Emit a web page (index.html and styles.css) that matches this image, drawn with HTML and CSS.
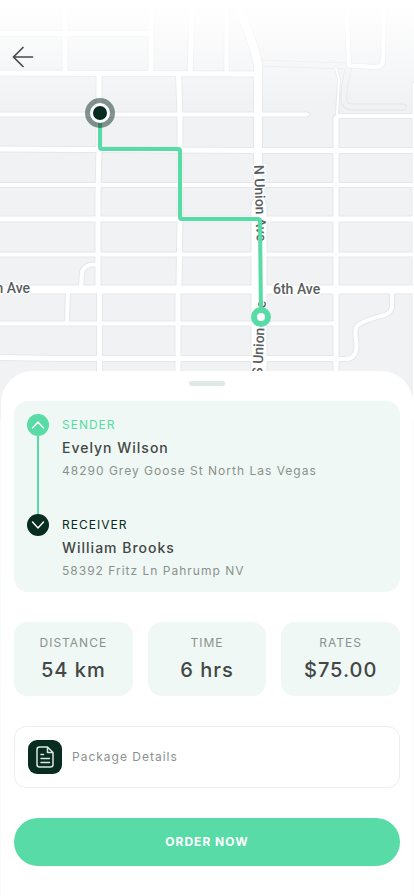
FILE: index.html
```html
<!DOCTYPE html>
<html lang="en">
<head>
  <meta charset="utf-8">
  <meta name="viewport" content="width=device-width, initial-scale=1">
  <title>Order</title>
  <link rel="stylesheet" href="styles.css">
</head>
<body>
  <main class="screen">
    <section class="map" aria-label="Route map">
      <svg class="map-art" viewBox="0 0 414 420" preserveAspectRatio="xMidYMin slice">
        <defs>
          <linearGradient id="fade" x1="0" y1="0" x2="0" y2="1">
            <stop offset="0" stop-color="#fff"/>
            <stop offset="0.1" stop-color="#fff" stop-opacity="0.95"/>
            <stop offset="1" stop-color="#fff" stop-opacity="0"/>
          </linearGradient>
          <g id="w2"><path d="M336 68L339 80L337 114"/></g>
          <g id="w4">
            <path d="M226.500 -5V73M-5 114.500H307M338 116H420M-5 185H420M-5 254.500H420M-5 323.500H336"/>
            <path d="M346 -5L349 65.500L376 67Q383 67 383 60L384 -5"/>
            <path d="M81 288L82 272Q84 266 90 265L98 264M68 290L67 323"/>
            <path d="M392 290V306Q392 312 385 315C375 318 365 319 357 326C353 331 357 340 356.500 346Q356 359 346 359H336"/>
          </g>
          <g id="w5">
            <path d="M-5 33.500H151M-5 73L258 74M-5 149L260 150.500H420M-5 219H420M-5 357.500L60 358.500H336"/>
            <path d="M65 -5V73M151 -5V73M192.500 -5L190 73"/>
            <path d="M99 74V149L98 190V285L99.500 294V425M178.500 74L180 115V219L179 285L178 294V425M336 118V425M415 85V425"/>
          </g>
          <g id="w8"><path d="M234 -5Q252 38 258 64V230M-5 289.500H420"/></g>
          <g id="w14"><path d="M259 205V425"/></g>
        </defs>
        <rect width="414" height="420" fill="#f1f2f4"/>
        <g fill="none" stroke-linecap="round" stroke-linejoin="round">
          <path d="M258 63L349 66Q343 90 344 100Q345 107 352 107H403" stroke="#e3e5e7" stroke-width="7"/>
          <path d="M258 63L349 66Q343 90 344 100Q345 107 352 107H403" stroke="#f1f2f3" stroke-width="5"/>
          <g stroke="#e5e7e8">
            <use href="#w2" stroke-width="4"/>
            <use href="#w4" stroke-width="6"/>
            <use href="#w5" stroke-width="7"/>
            <use href="#w8" stroke-width="10"/>
            <use href="#w14" stroke-width="17"/>
          </g>
          <g stroke="#fff">
            <use href="#w2" stroke-width="2"/>
            <use href="#w4" stroke-width="4"/>
            <use href="#w5" stroke-width="5"/>
            <use href="#w8" stroke-width="8"/>
            <use href="#w14" stroke-width="15"/>
          </g>
        </g>
        <rect width="414" height="105" fill="url(#fade)"/>
        <g class="street">
          <text x="30" y="293" text-anchor="end">6th Ave</text>
          <text x="273" y="294">6th Ave</text>
          <text transform="translate(254 165) rotate(88)">N Union Ave</text>
          <text transform="translate(262 376) rotate(-87)">S Union Ave</text>
        </g>
        <path d="M100 113V147Q100 149 102 149H178Q180 149 180 151V217Q180 219 182 219H258Q260 219 260 221L261 317" fill="none" stroke="#58dba6" stroke-width="4"/>
        <circle cx="100" cy="113" r="15" fill="#0b2e22" fill-opacity="0.5"/>
        <circle cx="100" cy="113" r="10" fill="#fff"/>
        <circle cx="100" cy="113" r="7" fill="#082c20"/>
        <circle cx="261" cy="317" r="7" fill="#fff" stroke="#58dba6" stroke-width="6"/>
      </svg>
      <button class="back" type="button" aria-label="Back">
        <svg width="22" height="22" viewBox="0 0 22 22"><path d="M20.500 11H2M11 1.500L1.500 11L11 20.500"/></svg>
      </button>
    </section>

    <section class="sheet">
      <div class="handle"></div>
      <ol class="route">
        <li class="stop sender">
          <div class="rail">
            <svg class="dot" viewBox="0 0 22 22"><circle cx="11" cy="11" r="11"/><path d="M5.500 14L11 8L16.500 14"/></svg>
          </div>
          <div class="who">
            <p class="role">SENDER</p>
            <p class="name">Evelyn Wilson</p>
            <p class="address">48290 Grey Goose St North Las Vegas</p>
          </div>
        </li>
        <li class="stop receiver">
          <div class="rail">
            <svg class="dot" viewBox="0 0 22 22"><circle cx="11" cy="11" r="11"/><path d="M5.500 8L11 14L16.500 8"/></svg>
          </div>
          <div class="who">
            <p class="role">RECEIVER</p>
            <p class="name">William Brooks</p>
            <p class="address">58392 Fritz Ln Pahrump NV</p>
          </div>
        </li>
      </ol>

      <dl class="stats">
        <div class="stat"><dt>DISTANCE</dt><dd>54 km</dd></div>
        <div class="stat"><dt>TIME</dt><dd>6 hrs</dd></div>
        <div class="stat"><dt>RATES</dt><dd>$75.00</dd></div>
      </dl>

      <button class="package" type="button">
        <span class="tile">
          <svg width="18" height="22" viewBox="0 0 18 22">
            <path d="M11.500 1H3.500Q1 1 1 3.500V18.500Q1 21 3.500 21H14.500Q17 21 17 18.500V6.500ZM11.500 1V6.500H17M5 8.500H7.500M5 12.500H13.500M5 16.500H13.500"/>
          </svg>
        </span>
        <span>Package Details</span>
      </button>

      <button class="order" type="button">ORDER NOW</button>
    </section>
  </main>
</body>
</html>
```
FILE: styles.css
```css
* {
  box-sizing: border-box;
  margin: 0;
  padding: 0;
}

body {
  background: #f9fafa;
  color: #434745;
  font-family: Inter, sans-serif;
}

button {
  border: 0;
  background: none;
  font: inherit;
  cursor: pointer;
}

.screen {
  min-height: 100vh;
  display: flex;
  flex-direction: column;
}

.map {
  position: relative;
  height: 420px;
  margin-bottom: -49px;
}

.map-art {
  display: block;
  width: 100%;
  height: 100%;
}

.street {
  fill: #5a5e62;
  stroke: #fff;
  stroke-width: 3px;
  stroke-linejoin: round;
  paint-order: stroke;
  font: 500 14px Roboto, sans-serif;
}

.back {
  position: absolute;
  left: 12px;
  top: 46px;
  width: 22px;
  height: 22px;
}

.back svg {
  display: block;
  fill: none;
  stroke: #4a4a4a;
  stroke-width: 1.7px;
  stroke-linecap: round;
}

.sheet {
  position: relative;
  flex: 1;
  display: flex;
  flex-direction: column;
  margin: 0 1px;
  padding: 10px 13px 30px;
  border-radius: 32px 32px 0 0;
  background: #fff;
}

.handle {
  align-self: center;
  width: 36px;
  height: 5px;
  margin-bottom: 15px;
  border-radius: 3px;
  background: #dfeae6;
}

.route {
  padding: 13px 13px 0;
  border-radius: 14px;
  background: #eff8f4;
  list-style: none;
}

.stop {
  display: flex;
  gap: 13px;
}

.sender {
  min-height: 100px;
}

.receiver {
  min-height: 78px;
}

.rail {
  display: flex;
  flex-direction: column;
  align-items: center;
}

.sender .rail::after {
  content: "";
  flex: 1;
  width: 2px;
  background: #58dba6;
}

.dot {
  width: 22px;
  height: 22px;
}

.dot circle {
  fill: #082c20;
}

.sender .dot circle {
  fill: #58dba6;
}

.dot path {
  fill: none;
  stroke: #fff;
  stroke-width: 1.4px;
  stroke-linecap: round;
  stroke-linejoin: round;
}

.who {
  display: flex;
  flex-direction: column;
  gap: 1px;
}

.role {
  color: #082c20;
  font-size: 12px;
  line-height: 22px;
  letter-spacing: 1px;
}

.sender .role {
  color: #58dba6;
}

.name {
  font-size: 14px;
  font-weight: 500;
  line-height: 22px;
  letter-spacing: 1px;
}

.address {
  color: #8b918e;
  font-size: 12px;
  line-height: 22px;
  letter-spacing: 1px;
}

.stats {
  display: grid;
  grid-template-columns: repeat(3, 1fr);
  gap: 15px;
  margin-top: 30px;
}

.stat {
  height: 74px;
  padding-top: 10px;
  border-radius: 14px;
  background: #eff8f4;
  text-align: center;
}

.stat dt {
  color: #8b918e;
  font-size: 12px;
  line-height: 22px;
  letter-spacing: 1px;
}

.stat dd {
  font-size: 20px;
  font-weight: 500;
  line-height: 32px;
  letter-spacing: 1px;
}

.package {
  display: flex;
  align-items: center;
  gap: 10px;
  margin-top: 30px;
  padding: 13px;
  border: 1px solid #eceeed;
  border-radius: 12px;
  color: #8b918e;
  font-size: 12px;
  line-height: 22px;
  letter-spacing: 1px;
}

.tile {
  display: grid;
  place-items: center;
  width: 34px;
  height: 34px;
  border-radius: 9px;
  background: #082c20;
}

.tile svg {
  fill: none;
  stroke: #dbe5e1;
  stroke-width: 1.5px;
  stroke-linecap: round;
  stroke-linejoin: round;
}

.order {
  height: 48px;
  margin-top: 30px;
  border-radius: 24px;
  background: #58dba6;
  color: #fff;
  font-size: 12px;
  font-weight: 700;
  line-height: 22px;
  letter-spacing: 1px;
}
```
